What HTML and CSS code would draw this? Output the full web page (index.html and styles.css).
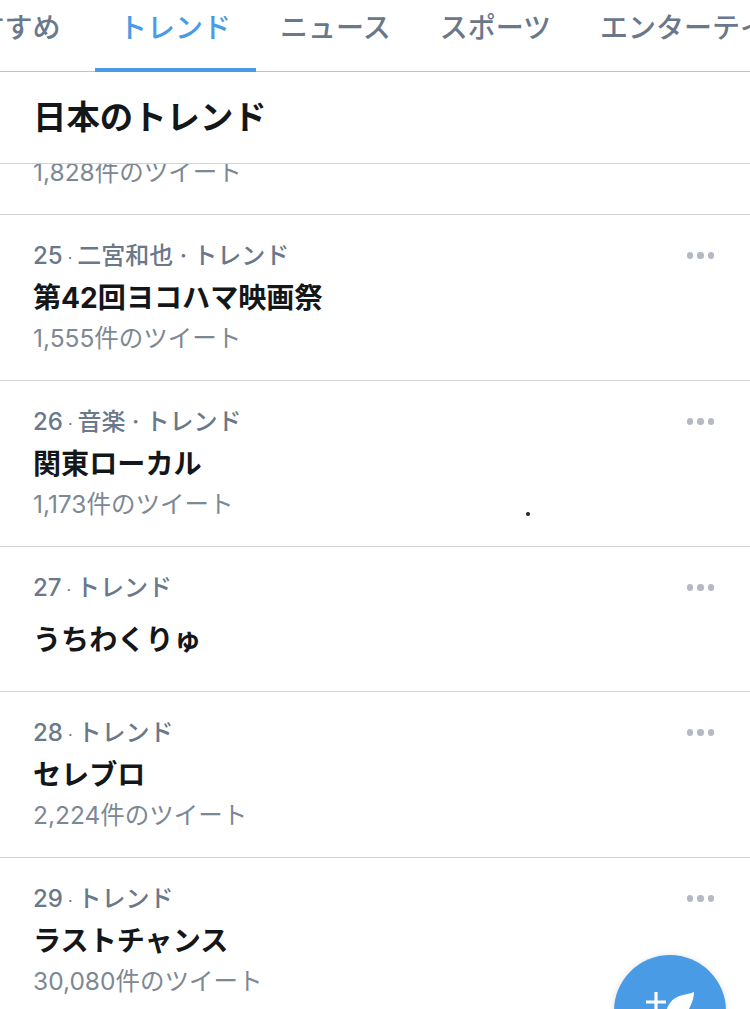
FILE: index.html
```html
<!DOCTYPE html>
<html lang="ja">
<head>
  <meta charset="UTF-8">
  <meta name="viewport" content="width=device-width, initial-scale=1.0">
  <title>日本のトレンド</title>
  <link rel="stylesheet" href="styles.css">
</head>
<body>
  <!-- Tabs -->
  <nav class="tabs">
    <div class="tab first">おすすめ</div>
    <div class="tab active">トレンド</div>
    <div class="tab">ニュース</div>
    <div class="tab">スポーツ</div>
    <div class="tab">エンターテインメント</div>
  </nav>

  <h1 class="heading">日本のトレンド</h1>

  <!-- Trend list -->
  <div class="clipped-row">
    <p class="count">1,828件のツイート</p>
  </div>

  <div class="trend">
    <div class="trend-info">
      <p class="meta">25<span class="sep">·</span>二宮和也 · トレンド</p>
      <p class="name">第42回ヨコハマ映画祭</p>
      <p class="count">1,555件のツイート</p>
    </div>
    <div class="dots"><span></span><span></span><span></span></div>
  </div>

  <div class="trend">
    <div class="trend-info">
      <p class="meta">26<span class="sep">·</span>音楽 · トレンド</p>
      <p class="name">関東ローカル</p>
      <p class="count">1,173件のツイート</p>
    </div>
    <div class="dots"><span></span><span></span><span></span></div>
    <span class="speck"></span>
  </div>

  <div class="trend no-count">
    <div class="trend-info">
      <p class="meta">27<span class="sep">·</span>トレンド</p>
      <p class="name">うちわくりゅ</p>
    </div>
    <div class="dots"><span></span><span></span><span></span></div>
  </div>

  <div class="trend">
    <div class="trend-info">
      <p class="meta">28<span class="sep">·</span>トレンド</p>
      <p class="name">セレブロ</p>
      <p class="count">2,224件のツイート</p>
    </div>
    <div class="dots"><span></span><span></span><span></span></div>
  </div>

  <div class="trend">
    <div class="trend-info">
      <p class="meta">29<span class="sep">·</span>トレンド</p>
      <p class="name">ラストチャンス</p>
      <p class="count">30,080件のツイート</p>
    </div>
    <div class="dots"><span></span><span></span><span></span></div>
  </div>

  <!-- Compose button -->
  <div class="fab">
    <svg width="112" height="112" viewBox="0 0 112 112">
      <path d="M42 37v20M32 47h20" stroke="#fff" stroke-width="3.2" fill="none"/>
      <path d="M80 37C74 40 62 39 56 48C54 51 53 53 52 56L74 56C77 50 80 44 80 37Z" fill="#fff"/>
    </svg>
  </div>
</body>
</html>
```

FILE: styles.css
```css
/* General */
html, body {
  height: 100%;
}

body {
  margin: 0;
  overflow: hidden;
  background-color: #fff;
  font-family: Inter, "Noto Sans CJK JP", sans-serif;
  color: #14171a;
}

p {
  margin: 0;
}

/* Tabs */
.tabs {
  display: flex;
  height: 71px;
  margin-left: -76px;
  border-bottom: 1px solid #bfc3c7;
  white-space: nowrap;
}

.tab {
  flex: none;
  padding: 8px 24.5px 0;
  font-size: 28px;
  line-height: 40px;
  font-weight: 500;
  color: #69788a;
}

.tab.first {
  padding-right: 34px;
}

.tab.active {
  color: #4a9be6;
  border-bottom: 4px solid #4a9be6;
  margin-bottom: -1px;
}

/* Heading */
.heading {
  margin: 0;
  height: 91px;
  padding-left: 33px;
  font-size: 33.4px;
  line-height: 90px;
  font-weight: 700;
  border-bottom: 1px solid #d0d3d6;
}

/* Trend rows */
.clipped-row {
  height: 50px;
  padding-left: 33px;
  overflow: hidden;
  border-bottom: 1px solid #d0d3d6;
}

.clipped-row .count {
  margin-top: -12px;
}

.trend {
  position: relative;
  display: flex;
  justify-content: space-between;
  height: 124px;
  padding: 21px 36px 20px 33px;
  border-bottom: 1px solid #d0d3d6;
}

.trend.no-count {
  height: 103px;
}

.no-count .name {
  margin-top: 10px;
}

.meta {
  font-size: 24px;
  line-height: 39px;
  font-weight: 500;
  color: #69788a;
}

.sep {
  margin: 0 5px;
  font-size: 16px;
  font-weight: 400;
}

.name {
  font-size: 28.1px;
  line-height: 40px;
  font-weight: 700;
}

.count {
  font-size: 24.5px;
  line-height: 41px;
  color: #7c8894;
}

.dots {
  display: flex;
  gap: 4px;
  margin-top: 16px;
}

.dots span {
  width: 6.5px;
  height: 6.5px;
  border-radius: 50%;
  background-color: #b4b9c3;
}

.speck {
  position: absolute;
  left: 526px;
  top: 131px;
  width: 4px;
  height: 4px;
  border-radius: 50%;
  background-color: #222;
}

/* Compose button */
.fab {
  position: fixed;
  right: 24px;
  bottom: -58px;
  width: 112px;
  height: 112px;
  border-radius: 50%;
  overflow: hidden;
  background-color: #4a9be6;
  box-shadow: 0 1px 6px rgba(0, 0, 0, 0.15);
}
```
